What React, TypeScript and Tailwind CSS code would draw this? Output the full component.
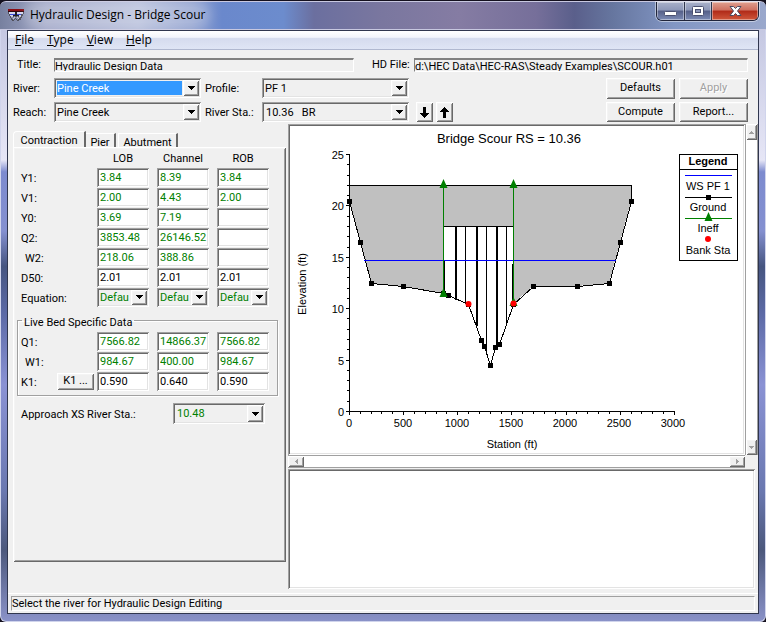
import type { ReactNode } from 'react';
import clsx from 'clsx';

const SUNKEN =
  'shadow-[inset_1px_1px_0_#a0a0a0,inset_-1px_-1px_0_#ffffff,inset_2px_2px_0_#696969,inset_-2px_-2px_0_#e3e3e3]';
const RAISED =
  'shadow-[inset_1px_1px_0_#ffffff,inset_-1px_-1px_0_#696969,inset_2px_2px_0_#f4f4f4,inset_-2px_-2px_0_#a0a0a0]';

type Cell = { value: string; calculated?: boolean };
type Row = { label: string; indent?: boolean; cells: Cell[] };

const calc = (value: string): Cell => ({ value, calculated: true });
const user = (value: string): Cell => ({ value });

const COLUMNS = ['LOB', 'Channel', 'ROB'];

const CONTRACTION_ROWS: Row[] = [
  { label: 'Y1:', cells: [calc('3.84'), calc('8.39'), calc('3.84')] },
  { label: 'V1:', cells: [calc('2.00'), calc('4.43'), calc('2.00')] },
  { label: 'Y0:', cells: [calc('3.69'), calc('7.19'), calc('')] },
  { label: 'Q2:', cells: [calc('3853.48'), calc('26146.52'), calc('')] },
  { label: 'W2:', indent: true, cells: [calc('218.06'), calc('388.86'), calc('')] },
  { label: 'D50:', cells: [user('2.01'), user('2.01'), user('2.01')] },
];

const LIVE_BED_ROWS: Row[] = [
  { label: 'Q1:', cells: [calc('7566.82'), calc('14866.37'), calc('7566.82')] },
  { label: 'W1:', indent: true, cells: [calc('984.67'), calc('400.00'), calc('984.67')] },
  { label: 'K1:', cells: [user('0.590'), user('0.640'), user('0.590')] },
];

interface ComboProps {
  id?: string;
  label?: string;
  value: string;
  className?: string;
  selectClassName?: string;
  focused?: boolean;
}

function Combo({ id, label, value, className, selectClassName, focused }: ComboProps) {
  return (
    <div className={clsx('flex bg-[#f0f0f0] p-0.5', SUNKEN, className)}>
      <div className={clsx('min-w-0 flex-1', focused && 'p-px')}>
        <select
          id={id}
          aria-label={label}
          className={clsx(
            'block h-full w-full appearance-none overflow-hidden pt-px outline-none',
            focused ? 'bg-[#3399ff] text-white outline-1 outline-dotted outline-[#c06000]' : 'bg-transparent',
            selectClassName,
          )}
        >
          <option>{value}</option>
        </select>
      </div>
      <span
        aria-hidden
        className={clsx('pointer-events-none flex w-4 items-center justify-center bg-[#f0f0f0]', RAISED)}
      >
        <svg width="7" height="4" viewBox="0 0 7 4" shapeRendering="crispEdges">
          <path d="M0 0H7V1H6V2H5V3H4V4H3V3H2V2H1V1H0Z" fill="#000" />
        </svg>
      </span>
    </div>
  );
}

function PushButton({
  children,
  className,
  disabled,
  label,
}: {
  children: ReactNode;
  className?: string;
  disabled?: boolean;
  label?: string;
}) {
  return (
    <button
      type="button"
      disabled={disabled}
      aria-label={label}
      className={clsx(
        'flex items-center justify-center bg-[#f0f0f0] disabled:text-[#a0a0a0] disabled:[text-shadow:1px_1px_0_#fff]',
        RAISED,
        className,
      )}
    >
      {children}
    </button>
  );
}

function DataRow({ row, children }: { row: Row; children?: ReactNode }) {
  return (
    <tr className="h-5">
      <th scope="row" className={clsx('text-left font-normal', row.indent && 'pl-1')}>
        <div className="flex items-center justify-between pr-[3px]">
          <span className="pt-1">{row.label}</span>
          {children}
        </div>
      </th>
      {row.cells.map((cell, i) => (
        <td key={COLUMNS[i]}>
          <input
            type="text"
            aria-label={`${row.label} ${COLUMNS[i]}`}
            defaultValue={cell.value}
            className={clsx(
              'block h-[19px] w-[52px] bg-white pl-[3px] outline-none',
              SUNKEN,
              cell.calculated && 'text-[#008000]',
            )}
          />
        </td>
      ))}
    </tr>
  );
}

function DataColumns() {
  return (
    <colgroup>
      <col className="w-19" />
      <col className="w-15" />
      <col className="w-15" />
      <col className="w-15" />
    </colgroup>
  );
}

// Cross section in station / elevation feet
const GROUND: [number, number][] = [
  [0, 20.45], [105, 16.45], [207, 12.45], [500, 12.15], [870, 11.5], [910, 11.3],
  [1097, 10.45], [1217, 6.9], [1248, 6.35], [1300, 4.5], [1348, 6.25], [1385, 6.55],
  [1510, 10.45], [1700, 12.15], [2105, 12.15], [2400, 12.45], [2505, 16.45], [2605, 20.45],
];
const PIERS = [
  { x: 166, w: 2, bottom: 174 },
  { x: 176, w: 1, bottom: 178 },
  { x: 187, w: 2, bottom: 200 },
  { x: 197, w: 1, bottom: 226 },
  { x: 207, w: 2, bottom: 221 },
  { x: 217, w: 1, bottom: 199 },
];

const px = (station: number) => Math.round(59 + (station * 325) / 3000);
const py = (elevation: number) => Math.round(285 - elevation * 10.28);

const toPoints = (points: [number, number][]) => points.map(([s, e]) => `${px(s)},${py(e)}`).join(' ');
const groundPath = toPoints(GROUND);
const openingPath = toPoints(GROUND.slice(4, 13).reverse());
const range = (n: number) => Array.from({ length: n }, (_, i) => i);

function Triangle({ x, y }: { x: number; y: number }) {
  return <path d={`M${x} ${y - 6}L${x + 4} ${y + 3}H${x - 4}Z`} fill="#008000" />;
}

function CrossSectionPlot() {
  const deckTop = py(22);
  return (
    <svg
      viewBox="0 0 453 327"
      className="block h-auto w-full bg-white font-['Liberation_Sans',Arial,sans-serif] text-[11px]"
      role="img"
      aria-label="Bridge Scour RS = 10.36"
    >
      <text x="219" y="17" textAnchor="middle" className="text-[13px]">
        Bridge Scour RS = 10.36
      </text>
      <g shapeRendering="crispEdges">
        <polygon points={`59,${deckTop} ${groundPath} ${px(2605)},${deckTop}`} fill="#c0c0c0" />
        <polygon points={`154,100 224,100 224,177 ${openingPath} 154,167`} fill="#fff" />
        <path d="M154 100.5H224" stroke="#000" />
        {PIERS.map((p) => (
          <rect key={p.x} x={p.x - 1} y="100" width={p.w} height={p.bottom - 100} fill="#000" />
        ))}
        <path d="M154.5 134V168M222.500 138V177" stroke="#000" />
        <polyline
          points={`59,${py(20.45)} 59,${deckTop} ${px(2605)},${deckTop} ${px(2605)},${py(20.45)}`}
          fill="none"
          stroke="#000"
          transform="translate(.5 .5)"
        />
        <polyline points={groundPath} fill="none" stroke="#000" transform="translate(.5 .5)" />
        <path d="M74 134.5H326" stroke="#0000ff" />
        {GROUND.map(([s, e]) => (
          <rect key={s} x={px(s) - 2} y={py(e) - 2} width="5" height="5" fill="#000" />
        ))}
        <path d="M153.5 59V168M223.5 59V177" stroke="#008000" />
        <path d="M59.5 28V285.5H385" fill="none" stroke="#000" />
        {range(26).map((i) => (
          <path key={i} d={`M${i % 5 ? 57 : 56} ${285.5 - Math.round(i * 10.28)}H59`} stroke="#000" />
        ))}
        {range(31).map((i) => (
          <path key={i} d={`M${59.5 + Math.round(i * 10.83)} 286V${i % 5 ? 288 : 289}`} stroke="#000" />
        ))}
      </g>
      <Triangle x={153.5} y={59} />
      <Triangle x={223.5} y={59} />
      <Triangle x={153.5} y={168} />
      <Triangle x={223.5} y={177} />
      <circle cx="178.5" cy="178" r="3" fill="#ff0000" />
      <circle cx="223.5" cy="177.5" r="3" fill="#ff0000" />
      {range(6).map((i) => (
        <text key={i} x="54" y={290 - Math.round(i * 51.4)} textAnchor="end">
          {i * 5}
        </text>
      ))}
      {range(7).map((i) => (
        <text key={i} x={59 + i * 54} y="301" textAnchor="middle">
          {i * 500}
        </text>
      ))}
      <text x="222" y="322" textAnchor="middle">
        Station (ft)
      </text>
      <text x="16" y="158" textAnchor="middle" transform="rotate(-90 16 158)">
        Elevation (ft)
      </text>
      <g shapeRendering="crispEdges" fill="none" stroke="#000">
        <rect x="389.5" y="28.5" width="58" height="106" fill="#fff" />
        <path d="M390 43.5H448M395 71.5H442" />
        <path d="M395 49.5H442" stroke="#0000ff" />
        <path d="M395 92.5H442" stroke="#008000" />
        <rect x="416" y="69" width="5" height="5" fill="#000" stroke="none" />
      </g>
      <Triangle x={418.5} y={92} />
      <circle cx="418" cy="113" r="3" fill="#ff0000" />
      <g textAnchor="middle">
        <text x="418" y="39" className="font-bold">
          Legend
        </text>
        <text x="418" y="64">WS PF 1</text>
        <text x="418" y="85">Ground</text>
        <text x="418" y="106">Ineff</text>
        <text x="418" y="128">Bank Sta</text>
      </g>
    </svg>
  );
}

function ScrollButton({ d, label, className }: { d: string; label: string; className: string }) {
  return (
    <PushButton label={label} className={className}>
      <svg width="7" height="7" viewBox="0 0 7 7" shapeRendering="crispEdges" aria-hidden>
        <path d={d} fill="#a0a0a0" />
      </svg>
    </PushButton>
  );
}

function AppIcon() {
  return (
    <svg width="16" height="12" viewBox="0 0 16 12" shapeRendering="crispEdges" aria-hidden>
      <path d="M1 3H15V7H1Z" fill="#d4d8f0" />
      <path d="M0 0H16V2H0Z" fill="#8a0c14" />
      <path d="M0 2H16V3H0Z" fill="#30040c" />
      <path d="M2 5H7V6H2ZM9 5H14V6H9Z" fill="#3a48d8" />
      <path d="M7 3H9V7H7ZM5 6H11V7H5Z" fill="#202028" />
      <path
        d="M0 3H1V5H2V7H3V9H4V10H5V11H6V10H7V9H8V10H9V11H10V10H11V9H12V7H13V5H15V3H16V5H15V7H14V9H13V11H11V12H9V11H8V10H7V11H6V12H4V11H3V9H2V7H1V5H0Z"
        fill="#50505c"
      />
      <path d="M3 7H5V8H3ZM6 8H7V9H6ZM9 8H10V9H9ZM11 7H13V8H11ZM5 9H6V10H5ZM10 9H11V10H10Z" fill="#c8c8cc" />
      <path d="M5 7H6V8H5ZM7 7H9V8H7ZM10 7H11V8H10Z" fill="#50505c" />
    </svg>
  );
}

function TitleBar() {
  return (
    <header className="flex h-[29px] items-start justify-between rounded-t-md border-y border-[#c8c8e0] bg-[linear-gradient(90deg,#77809f_0%,#a3a9c9_6%,#b7bfdb_18%,#93a3d0_25%,#6a88cc_29%,#6c8ccd_37%,#6b6f9f_41%,#7a779f_50%,#857ca3_60%,#766f9a_70%,#5a5f8b_75%,#66769f_80%,#8296c4_88%,#9aa8cc_100%)] pl-2">
      <div className="flex items-center gap-1.5 pt-[5px]">
        <AppIcon />
        <h1 className="rounded-full bg-white/20 text-[12px] leading-4 shadow-[0_0_10px_6px_rgba(255,255,255,0.2)]">
          Hydraulic Design - Bridge Scour
        </h1>
      </div>
      <div className="mr-[7px] flex h-[19px] overflow-hidden rounded-b-md border border-t-0 border-[#20243a] shadow-[0_0_0_1px_rgba(255,255,255,0.45)]">
        <button
          type="button"
          aria-label="Minimize"
          className="flex w-7 items-end justify-center border-r border-[#30364e] bg-[linear-gradient(#a9b1ca_0%,#8d97b8_45%,#555f88_50%,#7c8bb5_100%)] pb-1 inset-ring inset-ring-white/40"
        >
          <svg width="13" height="5" viewBox="0 0 13 5" aria-hidden>
            <rect x=".5" y=".5" width="12" height="4" rx="1" fill="#fff" stroke="#4a5070" />
          </svg>
        </button>
        <button
          type="button"
          aria-label="Maximize"
          className="flex w-[27px] items-center justify-center border-r border-[#30364e] bg-[linear-gradient(#a9b1ca_0%,#8d97b8_45%,#555f88_50%,#7c8bb5_100%)] inset-ring inset-ring-white/40"
        >
          <svg width="12" height="10" viewBox="0 0 12 10" aria-hidden>
            <rect x=".5" y=".5" width="11" height="9" rx="1" fill="#fff" stroke="#4a5070" />
            <rect x="3.5" y="3.5" width="5" height="3" fill="#8d97b8" stroke="#4a5070" />
          </svg>
        </button>
        <button
          type="button"
          aria-label="Close"
          className="flex w-[46px] items-center justify-center bg-[linear-gradient(#e0a090_0%,#cf7060_45%,#b02a18_50%,#d0583c_100%)] inset-ring inset-ring-white/40"
        >
          <svg width="13" height="11" viewBox="0 0 13 11" aria-hidden>
            <path
              d="M1 .5H4.500L6.500 2.500L8.500 .5H12L8.500 5L12 9.500H8.500L6.500 7.500L4.500 9.500H1L4.500 5Z"
              fill="#fff"
              stroke="#4a4a60"
            />
          </svg>
        </button>
      </div>
    </header>
  );
}

function MenuBar() {
  return (
    <nav className="flex h-[19px] items-center gap-[13px] border-b border-[#b0b8d0] bg-[linear-gradient(#ffffff_0%,#f2f4fb_35%,#d5dbee_42%,#dfe5f5_100%)] pl-[7px] text-[12px]">
      {['File', 'Type', 'View', 'Help'].map((item) => (
        <button key={item} type="button">
          <u>{item[0]}</u>
          {item.slice(1)}
        </button>
      ))}
    </nav>
  );
}

function ClippedField({ id, value }: { id: string; value: string }) {
  return (
    <div className="h-3.5 w-full overflow-hidden border border-t-2 border-b-white border-r-white border-t-[#808080] border-l-[#808080]">
      <input id={id} readOnly defaultValue={value} className="block h-[14px] w-full bg-transparent outline-none" />
    </div>
  );
}

function HeaderForm() {
  return (
    <div className="flex flex-col gap-1.5 pt-2 pr-[10px]">
      <div className="flex items-center">
        <label htmlFor="title" className="w-[41px] pl-1">
          Title:
        </label>
        <div className="w-[300px]">
          <ClippedField id="title" value="Hydraulic Design Data" />
        </div>
        <label htmlFor="hd-file" className="w-[60px] pl-[18px] whitespace-nowrap">
          HD File:
        </label>
        <div className="min-w-0 flex-1">
          <ClippedField id="hd-file" value={'d:\\HEC Data\\HEC-RAS\\Steady Examples\\SCOUR.h01'} />
        </div>
      </div>
      <div className="flex justify-between">
        <div className="grid grid-cols-[41px_147px_61px_147px_auto] gap-y-1">
          <label htmlFor="river" className="self-center pt-0.5">
            River:
          </label>
          <Combo id="river" value="Pine Creek" className="h-5" focused />
          <label htmlFor="profile" className="self-center pt-0.5 pl-1">
            Profile:
          </label>
          <Combo id="profile" value="PF 1" className="h-5" selectClassName="pl-px" />
          <span />
          <label htmlFor="reach" className="self-center pt-0.5">
            Reach:
          </label>
          <Combo id="reach" value="Pine Creek" className="h-5" selectClassName="pl-px" />
          <label htmlFor="river-sta" className="self-center pt-0.5 pl-1">
            River Sta.:
          </label>
          <Combo id="river-sta" value={'10.36\u00a0\u00a0\u00a0BR'} className="h-5" selectClassName="pl-0.5" />
          <div className="flex gap-[3px] pl-[7px]">
            <PushButton label="Next river station" className="h-5 w-[17px]">
              <svg width="9" height="11" viewBox="0 0 9 11" shapeRendering="crispEdges" aria-hidden>
                <path d="M3 0H6V6H9V7H8V8H7V9H6V10H5V11H4V10H3V9H2V8H1V7H0V6H3Z" />
              </svg>
            </PushButton>
            <PushButton label="Previous river station" className="h-5 w-[17px]">
              <svg width="9" height="11" viewBox="0 0 9 11" shapeRendering="crispEdges" aria-hidden>
                <path d="M3 11H6V5H9V4H8V3H7V2H6V1H5V0H4V1H3V2H2V3H1V4H0V5H3Z" />
              </svg>
            </PushButton>
          </div>
        </div>
        <div className="grid grid-cols-[69px_69px] gap-x-1 gap-y-[3px]">
          <PushButton>Defaults</PushButton>
          <PushButton disabled>Apply</PushButton>
          <PushButton>Compute</PushButton>
          <PushButton>Report...</PushButton>
        </div>
      </div>
    </div>
  );
}

function ScourTabs() {
  return (
    <section className="mb-[27px] flex w-[273px] shrink-0 flex-col pt-[9px]">
      <div role="tablist" className="flex h-4 items-end">
        <button
          type="button"
          role="tab"
          aria-selected="true"
          className="h-4 w-[73px] rounded-tl-sm border-t border-r-2 border-l border-white border-r-[#696969] pt-0.5"
        >
          Contraction
        </button>
        <button
          type="button"
          role="tab"
          aria-selected="false"
          className="h-3.5 w-[30px] border-t border-r-2 border-white border-r-[#696969] pt-0.5"
        >
          Pier
        </button>
        <button
          type="button"
          role="tab"
          aria-selected="false"
          className="ml-0.5 h-3.5 w-[60px] border-t border-r-2 border-l border-white border-r-[#696969] pt-0.5"
        >
          Abutment
        </button>
      </div>
      <div role="tabpanel" className={clsx('flex-1 px-1', RAISED)}>
        <table className="ml-1 w-64 table-fixed border-collapse">
          <DataColumns />
          <thead>
            <tr className="h-5">
              <td />
              {COLUMNS.map((c) => (
                <th key={c} scope="col" className="pt-1 pr-2 font-normal">
                  {c}
                </th>
              ))}
            </tr>
          </thead>
          <tbody>
            {CONTRACTION_ROWS.map((row) => (
              <DataRow key={row.label} row={row} />
            ))}
            <tr className="h-5">
              <th scope="row" className="pt-1 text-left font-normal">
                Equation:
              </th>
              {COLUMNS.map((c) => (
                <td key={c}>
                  <Combo
                    label={`Equation ${c}`}
                    value="Default"
                    className="h-[19px] w-[52px]"
                    selectClassName="pr-0.5 pl-px text-[#008000]"
                  />
                </td>
              ))}
            </tr>
          </tbody>
        </table>
        <fieldset className="mt-1 w-[261px] border border-[#a0a0a0] pt-0.5 pb-1 pl-[3px] shadow-[1px_1px_0_#fff,inset_1px_1px_0_#fff]">
          <legend className="ml-px px-0.5 pt-1.5 leading-3">Live Bed Specific Data</legend>
          <table className="w-64 table-fixed border-collapse">
            <DataColumns />
            <tbody>
              {LIVE_BED_ROWS.map((row) => (
                <DataRow key={row.label} row={row}>
                  {row.label === 'K1:' && <PushButton className="h-[17px] w-[37px]">K1 ...</PushButton>}
                </DataRow>
              ))}
            </tbody>
          </table>
        </fieldset>
        <div className="mt-[7px] ml-1 flex items-center">
          <label htmlFor="approach" className="w-[152px] pt-0.5">
            Approach XS River Sta.:
          </label>
          <Combo
            id="approach"
            value="10.48"
            className="h-[21px] w-[92px]"
            selectClassName="pl-0.5 text-[#008000]"
          />
        </div>
      </div>
    </section>
  );
}

export default function App() {
  return (
    <div className="flex min-h-screen flex-col bg-[#14101e] pt-px font-['Roboto','Liberation_Sans',sans-serif] text-[11px] leading-[14px] text-black">
      <div className="font-['Open_Sans','Noto_Sans',sans-serif]">
        <TitleBar />
      </div>
      <div className="flex flex-1 flex-col rounded-b-md border-x border-b border-[#d0d4ec] bg-[linear-gradient(#c5c8e2_0%,#e6e6f6_22%,#7d8bcf_24%,#8490d0_34%,#465580_40%,#5c6aa6_48%,#8a92d4_60%,#6a78b0_78%,#4c587c_88%,#8a92c8_100%)] px-1.5 pb-[7px]">
        <div className="flex flex-1 flex-col border border-[#30364e] bg-[#f0f0f0]">
          <div className="font-['Open_Sans','Noto_Sans',sans-serif]">
            <MenuBar />
          </div>
          <main className="flex flex-1 flex-col pl-[5px]">
            <HeaderForm />
            <div className="flex flex-1">
              <ScourTabs />
              <div className="ml-0.5 flex min-w-0 flex-1 flex-col pt-0.5">
                <div className="flex">
                  <div className={clsx('min-w-0 flex-1 p-0.5', SUNKEN)}>
                    <CrossSectionPlot />
                  </div>
                  <div className="flex w-[13px] flex-col justify-between border-r border-l border-[#a0a0a0] bg-white">
                    <ScrollButton label="Scroll up" d="M3 2H4V3H5V4H6V5H1V4H2V3H3Z" className="h-4 w-full" />
                    <ScrollButton label="Scroll down" d="M1 2H6V3H5V4H4V5H3V4H2V3H1Z" className="h-4 w-full" />
                  </div>
                </div>
                <div className="mr-[13px] flex h-[13px] justify-between border-y border-[#a0a0a0] bg-white">
                  <ScrollButton label="Scroll left" d="M5 1V6H4V5H3V4H2V3H3V2H4V1Z" className="h-full w-4" />
                  <ScrollButton label="Scroll right" d="M2 1V6H3V5H4V4H5V3H4V2H3V1Z" className="h-full w-4" />
                </div>
                <textarea
                  aria-label="Scour results"
                  className={clsx('mt-px mr-[3px] flex-1 resize-none bg-white p-1 outline-none', SUNKEN)}
                />
              </div>
            </div>
          </main>
          <footer className="mt-1 border-t border-white px-[3px] pt-0.5 pb-0.5">
            <div className="border border-r-white border-b-white border-t-[#a0a0a0] border-l-[#a0a0a0] leading-[13px]">
              Select the river for Hydraulic Design Editing
            </div>
          </footer>
        </div>
      </div>
    </div>
  );
}
